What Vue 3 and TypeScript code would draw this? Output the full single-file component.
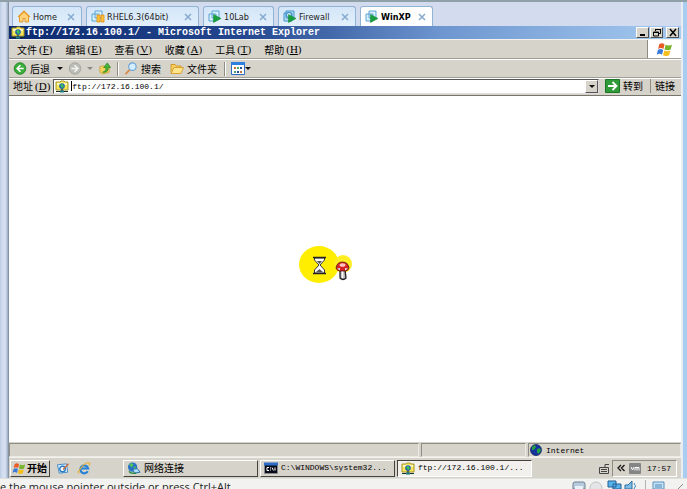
<script setup lang="ts">
import { ref } from 'vue'

interface Tab { name: string; kind: string; cls: string }
const tabs: Tab[] = [
  { name: 'Home', kind: 'home', cls: 't-home' },
  { name: 'RHEL6.3(64bit)', kind: 'paused', cls: 't-rhel' },
  { name: '10Lab', kind: 'running', cls: 't-lab' },
  { name: 'Firewall', kind: 'team', cls: 't-fire' },
  { name: 'WinXP', kind: 'running', cls: 't-xp' },
]
const active = ref('WinXP')
const menus = [
  { label: '文件', key: 'F' },
  { label: '编辑', key: 'E' },
  { label: '查看', key: 'V' },
  { label: '收藏', key: 'A' },
  { label: '工具', key: 'T' },
  { label: '帮助', key: 'H' },
]
const address = ref('ftp://172.16.100.1/')
</script>

<template>
  <svg class="defs" aria-hidden="true">
    <symbol id="ftp" viewBox="0 0 14 12">
      <path d="M1 1.500h4l1-1h3l1 1h3v8H1z" fill="#f6e65a" stroke="#a8962c" />
      <path d="M2 2.500h10v2H2z" fill="#fffbc0" />
      <circle cx="7" cy="5.600" r="2.800" fill="#1d58b0" />
      <path d="M5 5l2-2 1 1 1 2-2 2-1-2z" fill="#3fbf5c" />
      <path d="M7 8.500v2M1 11h12" stroke="#142c2c" stroke-width="1.200" />
      <path d="M5 10h4v2H5z" fill="#1a7a80" />
    </symbol>
    <symbol id="flag" viewBox="0 0 16 14">
      <path d="M3 2q2.500-1.800 5 0L7 6.500q-2.500-1.800-5 0z" fill="#ea5a24" />
      <path d="M9 2.500q2.500 1.500 6 0L13.800 7q-3 1.500-5.800 0z" fill="#78b52c" />
      <path d="M1.800 7.500q2.500-1.800 5 0L5.600 12q-2.500-1.800-5 0z" fill="#3b7ad6" />
      <path d="M7.800 8q2.800 1.500 5.800 0l-1.200 4.500q-3 1.500-5.800 0z" fill="#f6bd1c" />
    </symbol>
    <symbol id="home" viewBox="0 0 13 13">
      <path d="M2 6v6h3.500V8.500h2V12H11V6L6.500 2z" fill="#ffd27a" stroke="#e29a28" />
      <path d="M.7 7L6.500 1.300 12.300 7" fill="none" stroke="#e8a030" stroke-width="1.600" />
    </symbol>
    <symbol id="paused" viewBox="0 0 14 13">
      <path d="M4 1h7v7H4zM1 4h7v7H1z" fill="#d8f0fc" stroke="#5ba4d4" />
      <path d="M6 5h3v7H6zM10 5h3v7h-3z" fill="#ffc43c" stroke="#dc8c12" stroke-width=".8" />
    </symbol>
    <symbol id="running" viewBox="0 0 14 13">
      <path d="M4 1h7v7H4zM1 4h7v7H1z" fill="#d8f0fc" stroke="#5ba4d4" />
      <path d="M5.500 4.500v8L13 8.500z" fill="#18a03c" stroke="#0c8030" stroke-width=".5" />
    </symbol>
    <symbol id="team" viewBox="0 0 14 13">
      <path d="M3 1h8v7H3zM1 3h8v8H1z" fill="#b9def4" stroke="#3f92cb" />
      <circle cx="6" cy="5" r="2.500" fill="#dff2fd" stroke="#3486c2" />
      <path d="M5.500 4.500v8L13 8.500z" fill="#18a03c" stroke="#0c8030" stroke-width=".5" />
    </symbol>
    <symbol id="back" viewBox="0 0 14 14">
      <circle cx="7" cy="7" r="6.200" fill="#3aae3a" stroke="#1e8424" />
      <path d="M7.500 3.500L4 7l3.500 3.500M4 7h7" fill="none" stroke="#fff" stroke-width="1.800" />
    </symbol>
    <symbol id="fwd" viewBox="0 0 14 14">
      <circle cx="7" cy="7" r="6.200" fill="#bdbdb8" stroke="#a3a39e" />
      <path d="M6.500 3.500L10 7l-3.500 3.500M10 7H3" fill="none" stroke="#f2f2ee" stroke-width="1.800" />
    </symbol>
    <symbol id="up" viewBox="0 0 13 14">
      <path d="M1 5l4-1 1 1 5-1v7l-7 2-3-2z" fill="#f4d25c" stroke="#c89a28" stroke-width=".8" />
      <path d="M4 11q4-1 3.500-5H5l4-5 3.500 5H10q0 6-6 5z" fill="#45b53a" stroke="#20801e" stroke-width=".7" />
    </symbol>
    <symbol id="search" viewBox="0 0 14 14">
      <path d="M6 8l-5 5" stroke="#d98a48" stroke-width="2" />
      <circle cx="8.500" cy="5" r="4" fill="#d3efff" stroke="#6aa3d8" stroke-width="1.200" />
    </symbol>
    <symbol id="folder" viewBox="0 0 14 12">
      <path d="M1 10V2h4l1 1.500h5V6" fill="#f6cf5e" stroke="#d49a28" />
      <path d="M1 11l3-6h9.500L11 11z" fill="#ffe48c" stroke="#d9a136" />
    </symbol>
    <symbol id="views" viewBox="0 0 14 13">
      <path d="M.5.500h13v12H.5z" fill="#fff" stroke="#2c6cc4" />
      <path d="M0 0h14v3H0z" fill="#2f7fe0" />
      <path d="M3 5h2v2H3zM9 9h2v2H9z" fill="#c07040" />
      <path d="M6 5h2v2H6zM3 9h2v2H3z" fill="#4ba468" />
      <path d="M9 5h2v2H9zM6 9h2v2H6z" fill="#24509c" />
    </symbol>
    <symbol id="go" viewBox="0 0 15 14">
      <path d="M.5.500h14v13H.5z" fill="#2f9a38" stroke="#1a7624" />
      <path d="M3 7h8M7.500 3L11.500 7l-4 4" fill="none" stroke="#fff" stroke-width="1.800" />
    </symbol>
    <symbol id="globe" viewBox="0 0 12 12">
      <circle cx="6" cy="6" r="5.500" fill="#1632a0" stroke="#101c50" stroke-width=".7" />
      <path d="M2 3l3-2 1 2-2 3-2 0zM7 5l3-1 1 3-3 3-1-2z" fill="#23a040" />
    </symbol>
    <symbol id="outlook" viewBox="0 0 14 14">
      <path d="M1 3l10-1 1 9-9 1z" fill="#d8efff" stroke="#3f86c4" />
      <circle cx="6.500" cy="7.500" r="3" fill="#fff" stroke="#2478c4" stroke-width="1.500" />
      <path d="M7 8l6-6" stroke="#d26a3a" stroke-width="1.500" />
    </symbol>
    <symbol id="ie" viewBox="0 0 14 14">
      <path d="M11 10a4.200 4.200 0 1 1 .4-3H4" fill="none" stroke="#2682d8" stroke-width="2.400" />
      <path d="M2 12Q-1 12 4 6t9-5q1 1-1 3" fill="none" stroke="#e9b230" stroke-width="1.200" />
    </symbol>
    <symbol id="net" viewBox="0 0 15 14">
      <circle cx="6" cy="5.500" r="5" fill="#2a72c8" />
      <path d="M2 3l3-2 2 2-2 3zM7 5l3 0-2 4z" fill="#52c45a" />
      <path d="M6 8l5-1 3 4-6 1z" fill="#a9dcff" stroke="#236aa6" />
      <path d="M2 10q2 3 8 2" fill="none" stroke="#238a38" stroke-width="1.500" />
    </symbol>
  </svg>

  <div class="host">
    <div class="rail"></div>
    <main class="vm">
      <nav class="tabs">
        <div v-for="t in tabs" :key="t.name" class="tab" :class="[t.cls, { on: active === t.name }]">
          <button class="pick" @click="active = t.name">
            <svg class="i14"><use :href="'#' + t.kind" /></svg>{{ t.name }}
          </button>
          <button class="x" :aria-label="'Close ' + t.name">
            <svg viewBox="0 0 8 8"><path d="M1 1l6 6M7 1L1 7" stroke="#86aace" stroke-width="1.500" /></svg>
          </button>
        </div>
      </nav>

      <section class="guest">
        <header class="title">
          <svg class="i14"><use href="#ftp" /></svg>
          <h1>ftp://172.16.100.1/ - Microsoft Internet Explorer</h1>
          <button class="wb" aria-label="Minimize"><svg viewBox="0 0 10 9"><path d="M2 7h5" stroke="#000" stroke-width="2" /></svg></button>
          <button class="wb" aria-label="Restore"><svg viewBox="0 0 10 9"><path d="M3.500 3V1.500h5v4H7M3 1.500h6M1.500 4h5v4h-5zM1 4.500h6" fill="none" stroke="#000" /></svg></button>
          <button class="wb close" aria-label="Close"><svg viewBox="0 0 10 9"><path d="M2 1l6 7M8 1L2 8" stroke="#000" stroke-width="1.500" /></svg></button>
        </header>

        <div class="menubar">
          <button v-for="m in menus" :key="m.key">{{ m.label }}<span class="key">(<u>{{ m.key }}</u>)</span></button>
          <div class="brand"><svg viewBox="0 0 16 14"><use href="#flag" /></svg></div>
        </div>

        <div class="toolbar">
          <button class="back"><svg class="i14"><use href="#back" /></svg>后退</button>
          <i class="arrow first"></i>
          <button aria-label="Forward"><svg class="i14"><use href="#fwd" /></svg></button>
          <i class="arrow dim"></i>
          <button aria-label="Up"><svg class="i14"><use href="#up" /></svg></button>
          <i class="sep"></i>
          <button><svg class="i14"><use href="#search" /></svg>搜索</button>
          <button class="dirs"><svg class="i14"><use href="#folder" /></svg>文件夹</button>
          <i class="sep"></i>
          <button aria-label="Views" class="views"><svg class="i14"><use href="#views" /></svg><i class="arrow"></i></button>
        </div>

        <div class="addressbar">
          <label for="addr">地址<span class="key">(<u>D</u>)</span></label>
          <div class="field">
            <svg class="i14"><use href="#ftp" /></svg>
            <i class="caret"></i>
            <input id="addr" v-model="address" type="text" spellcheck="false" />
            <button class="drop" aria-label="Address history"><i class="arrow"></i></button>
          </div>
          <button class="go"><svg class="go-icon"><use href="#go" /></svg>转到</button>
          <button class="links">链接</button>
        </div>

        <div class="page">
          <svg class="pointer" viewBox="0 0 54 38">
            <ellipse cx="20" cy="18.500" rx="20" ry="18.500" fill="#ffee00" />
            <circle cx="44" cy="18" r="9" fill="#ffee22" />
            <path d="M15.500 12v2l4.500 5-4.500 5v3h10v-3L21 19l4.500-5v-2z" fill="#fff" stroke="#333" />
            <path d="M14 11.500h13M14 27.500h13" stroke="#222" stroke-width="1.600" />
            <path d="M18 15h5l-2.500 3zM17 26l3.500-3 3.500 3z" fill="#555" />
            <path d="M41 24h5l1 8q-3 3-6 0z" fill="#b8b8b8" stroke="#222" stroke-width="1.300" />
            <path d="M43.500 25v7" stroke="#fff" stroke-width="1.500" />
            <path d="M37 22q1-6 6.500-6t6.500 6q-1 3-4 3h-5q-3 0-4-3z" fill="#d62024" stroke="#551010" stroke-width=".8" />
            <ellipse cx="43.500" cy="19" rx="3" ry="1.800" fill="#ffc4c0" />
            <path d="M38 22.500l3-.5v2.500zM46 22l3 .5-3 2z" fill="#ddd" />
          </svg>
        </div>

        <footer class="status">
          <div class="cell wide"></div>
          <div class="cell mid"></div>
          <div class="cell zone"><svg class="i12"><use href="#globe" /></svg>Internet</div>
        </footer>

        <div class="taskbar">
          <button class="start"><svg class="i14"><use href="#flag" /></svg>开始</button>
          <div class="quick">
            <button aria-label="Outlook Express"><svg class="i14"><use href="#outlook" /></svg></button>
            <button aria-label="Internet Explorer"><svg class="i14"><use href="#ie" /></svg></button>
          </div>
          <div class="tasks">
            <button class="task cjk"><svg class="i14"><use href="#net" /></svg>网络连接</button>
            <button class="task">
              <svg class="i14" viewBox="0 0 14 12"><path d="M.5 1h13v10H.5z" fill="#080c18" stroke="#888" /><path d="M0 0h14v3H0z" fill="#2c6cc8" /><path d="M5 5H3v3h2M6.500 5v1M6.500 7v1M8 5l1.500 3M11 5v3" fill="none" stroke="#fff" /></svg>
              C:\WINDOWS\system32...
            </button>
            <button class="task on"><svg class="i14"><use href="#ftp" /></svg>ftp://172.16.100.1/...</button>
          </div>
          <svg class="ime" viewBox="0 0 12 12"><path d="M1.500 5.500h9v6h-9zM7 5V2.500h4M3 7.500h6M3 9.500h6" fill="none" stroke="#444" /></svg>
          <div class="tray">
            <svg class="chev" viewBox="0 0 8 8"><path d="M4 1L1 4l3 3M7.500 1l-3 3 3 3" fill="none" stroke="#111" stroke-width="1.300" /></svg>
            <svg class="vmw" viewBox="0 0 12 11"><rect width="12" height="11" rx="1" fill="#858585" /><path d="M2 4l1.500 3L5 4M6 7.500V4.500h4v3M8 4.500v3" fill="none" stroke="#fff" /></svg>
            <time>17:57</time>
          </div>
        </div>
      </section>
    </main>
    <div class="edge"></div>
  </div>
  <div class="hint">
    <p>e the mouse pointer outside or press Ctrl+Alt.</p>
    <svg class="devices" viewBox="0 0 112 9">
      <path d="M1 9V4q0-2 2-2h8q2 0 2 2v5z" fill="#b8cbdc" stroke="#6c8294" />
      <path d="M3 6h8v3H3z" fill="#e8f1f8" />
      <circle cx="24" cy="8" r="6" fill="#e3e5e6" stroke="#bfc3c6" />
      <path d="M36 1h8v6h-8zM41 4h8v5h-8z" fill="#58b4ec" stroke="#245f96" />
      <path d="M53 5h3l4-4v8h-7z" fill="#7cbce6" stroke="#2d6e9e" />
      <path d="M62 3q3 3 0 6" fill="none" stroke="#3d8cc4" />
      <path d="M73.500 0v9" stroke="#b0b4b8" />
      <path d="M81 2h11v7H81z" fill="#c6e2f6" stroke="#5c92bc" />
      <path d="M83 5h7M83 7h7" stroke="#4c88b8" />
      <path d="M106 9l5-5" stroke="#888" />
    </svg>
  </div>
</template>

<style>
html, body { margin: 0; }
#app { display: flex; flex-direction: column; height: 100vh; overflow: hidden; }
</style>

<style scoped>
* { box-sizing: border-box; }
button { margin: 0; padding: 0; border: 0; background: none; font: inherit; color: inherit; white-space: nowrap; display: flex; align-items: center; }
svg { display: block; flex: none; }
.defs { position: absolute; width: 0; height: 0; }
.i14 { width: 14px; height: 13px; }
.i12 { width: 12px; height: 12px; }
.host { flex: 1; min-height: 0; display: flex; border-top: 2px solid #8fa0a8; background: #d4dff2; }
.rail { width: 8px; background: linear-gradient(90deg, #c0cfe4 1px, #d3def0 2px, #d3def0 6px, #a7b5cc 7px); }
.vm { flex: 1; min-width: 0; display: flex; flex-direction: column; border-left: 1px solid #8592a4; }
.edge { width: 6px; border-left: 2px solid #e9edf2; background: #a9cdf0; }

.tabs { display: flex; gap: 4px; height: 24px; padding: 4px 0 0 3px; background: #d3dcef; font: 9px "DejaVu Sans Condensed", "DejaVu Sans", sans-serif; color: #222; }
.tab { display: flex; align-items: center; justify-content: space-between; padding: 0 6px 0 4px; border: 1px solid #91b3d4; border-bottom: 0; border-radius: 3px 3px 0 0; background: linear-gradient(#d3e6f8, #e3effb); }
.pick { gap: 2px; }
.x svg { width: 8px; height: 8px; }
.t-home { width: 70px; }
.t-rhel { width: 113px; }
.t-lab { width: 71px; }
.t-fire { width: 78px; }
.t-xp { width: 73px; }
.tab.on { background: #fff; font-weight: bold; color: #000; }

.guest { flex: 1; min-height: 0; display: flex; flex-direction: column; background: #d6d3ca; font: 10px "Liberation Mono", "Noto Sans CJK SC", monospace; color: #000; }
.title { display: flex; align-items: center; height: 13px; padding: 0 2px; gap: 1px; background: linear-gradient(90deg, #0c2a70, #24478f 35%, #6f97d0 65%, #a6caf0); color: #fff; }
h1 { flex: 1; margin: 0; font-size: 10px; line-height: 13px; white-space: nowrap; }
.wb { width: 13px; height: 11px; justify-content: center; background: #d6d3ca; border: 1px solid; border-color: #fff #505050 #505050 #fff; }
.wb svg { width: 10px; height: 9px; }
.close { margin-left: 2px; }

.menubar { display: flex; align-items: stretch; gap: 13px; height: 20px; padding-left: 8px; border-top: 1px solid #f4f2ec; border-bottom: 1px solid #a19e94; font-family: "Noto Sans CJK SC", sans-serif; }
.key { font: 11px "Liberation Serif", serif; padding-left: 2px; }
.brand { margin-left: auto; width: 34px; display: flex; align-items: center; justify-content: center; background: #fff; border-left: 1px solid #8d8a82; }
.brand svg { width: 17px; height: 15px; }

.toolbar { display: flex; align-items: center; height: 19px; padding-left: 4px; gap: 5px; border-top: 1px solid #fff; border-bottom: 1px solid #a19e94; font-family: "Noto Sans CJK SC", sans-serif; }
.toolbar button { gap: 3px; }
.arrow { border: 3px solid transparent; border-top-color: #111; border-bottom: 0; width: 0; height: 0; flex: none; }
.first { margin-left: 2px; }
.dim { border-top-color: #8c8a84; }
.sep { width: 2px; height: 14px; border-left: 1px solid #8f8c84; border-right: 1px solid #fff; }
.toolbar .dirs { margin: 0 2px 0 4px; }
.toolbar .views { gap: 0; }

.addressbar { display: flex; align-items: center; height: 18px; padding: 0 2px 2px 4px; border-top: 1px solid #fff; border-bottom: 1px solid #77746c; font-family: "Noto Sans CJK SC", sans-serif; line-height: 14px; }
.field { flex: 1; min-width: 0; display: flex; align-items: center; height: 15px; margin-left: 3px; padding-left: 1px; background: #fff; border: 1px solid; border-color: #555 #ddd #ddd #555; }
.caret { width: 1px; height: 10px; margin-left: 2px; background: #000; }
input { flex: 1; min-width: 0; height: 13px; padding: 0; border: 0; outline: 0; background: none; font: 8px "Liberation Mono", monospace; color: #000; }
.drop { width: 13px; height: 13px; justify-content: center; background: #d6d3ca; border: 1px solid; border-color: #fff #555 #555 #fff; }
.go { gap: 3px; margin-left: 6px; }
.go-icon { width: 15px; height: 14px; }
.links { margin-left: 7px; padding: 0 4px; height: 14px; border-left: 1px solid #8f8c84; }

.page { flex: 1; min-height: 0; display: flex; align-items: center; justify-content: center; background: #fff; }
.pointer { width: 54px; height: 38px; margin-right: 38px; margin-bottom: 8px; }

.status { display: flex; gap: 2px; height: 15px; padding-top: 1px; }
.cell { display: flex; align-items: center; gap: 4px; border: 1px solid; border-color: #8f8c84 #eceae4 #eceae4 #8f8c84; font-size: 8px; }
.wide { flex: 1; }
.mid { width: 105px; }
.zone { width: 153px; padding-left: 1px; }

.taskbar { display: flex; align-items: center; height: 21px; padding: 1px 4px 1px 1px; border-top: 1px solid #f4f2ec; }
.start, .task { height: 17px; border: 1px solid; border-color: #fff #45433e #45433e #fff; line-height: 14px; }
.start { padding: 0 2px 0 1px; gap: 1px; font: bold 10px/14px "Noto Sans CJK SC", sans-serif; }
.quick { display: flex; gap: 7px; margin: 0 32px 0 6px; }
.tasks { flex: 1; min-width: 0; display: flex; gap: 2px; }
.task { flex: 0 1 135px; padding-left: 3px; gap: 3px; font-size: 8px; }
.cjk { font: 10px/14px "Noto Sans CJK SC", sans-serif; }
.task.on { background: #f1f0ec; border-color: #45433e #fff #fff #45433e; }
.ime { width: 12px; height: 12px; margin-right: 2px; }
.tray { display: flex; align-items: center; gap: 4px; height: 17px; padding: 0 5px 0 4px; border: 1px solid; border-color: #8f8c84 #fff #fff #8f8c84; }
.chev { width: 8px; height: 8px; }
.vmw { width: 12px; height: 11px; }
time { font-size: 8px; padding-left: 2px; }

.hint { flex: none; display: flex; justify-content: space-between; height: 11px; overflow: hidden; background: #f2f2f0; border-top: 1px solid #e0e0dc; }
p { margin: 0; padding-top: 1px; white-space: nowrap; font: 11px/14px "Open Sans", sans-serif; color: #222; }
.devices { width: 112px; height: 9px; margin: 1px 3px 0 0; }
</style>
